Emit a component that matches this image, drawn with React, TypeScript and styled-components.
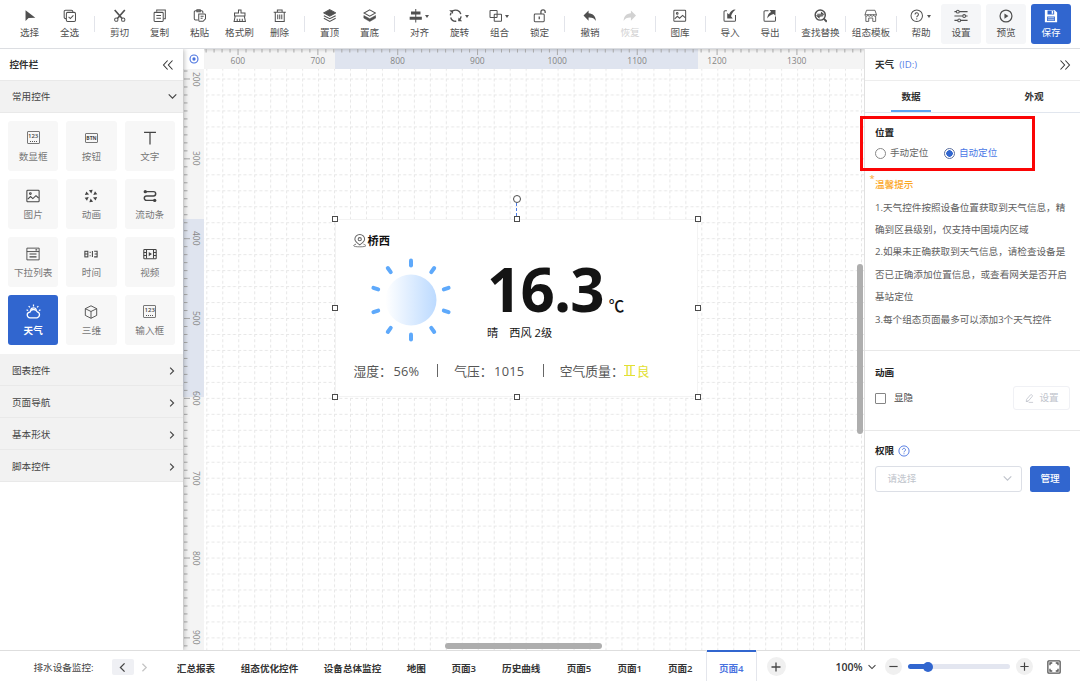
import React from "react";
import styled, { createGlobalStyle, css } from "styled-components";

const Global = createGlobalStyle`
  * { box-sizing: border-box; }
  body {
    margin: 0;
    background: #fff;
    color: #444;
    font-family: "Open Sans", "Noto Sans CJK SC", sans-serif;
    font-size: 9.6px;
    line-height: 14px;
    overflow: hidden;
  }
`;

const BLUE = "#3166cf";

/* ---------- icons ---------- */

type IconName = keyof typeof shapes;

const shapes = {
  cursor: <path d="M3 1.5v12.6l3.6-3.5 8-.3z" fill="currentColor" stroke="none" />,
  selectAll: (
    <>
      <path d="M3.6 11.4H3A1.6 1.6 0 0 1 1.400 9.800V3A1.600 1.600 0 0 1 3 1.400h7A1.600 1.600 0 0 1 11.600 3v.6" />
      <rect x="4" y="4" width="10.800" height="10.800" rx="1.500" />
      <path d="M6.600 9.400l2.100 2 3.600-3.900" />
    </>
  ),
  cut: (
    <>
      <path d="M2 1.200l8.800 10M14 1.200l-8.800 10" strokeWidth="2" />
      <circle cx="3.900" cy="12.600" r="2" />
      <circle cx="12.100" cy="12.600" r="2" />
    </>
  ),
  copy: (
    <>
      <path d="M4.400 3.400V1.300h10.200v10.300h-2.200" />
      <rect x="1.300" y="4" width="10.800" height="10.700" rx="1" />
      <path d="M4 7.800h5.500M4 10.900h5.500" />
    </>
  ),
  paste: (
    <>
      <path d="M5.800 13H3a1.500 1.500 0 0 1-1.500-1.500v-8A1.500 1.500 0 0 1 3 2h7.200a1.500 1.500 0 0 1 1.500 1.500V5" />
      <path d="M4.600 1h4v2.200h-4z" />
      <path d="M6.800 5.800h6.800a1.200 1.200 0 0 1 1.200 1.200v4.600L12 14.600H8a1.200 1.200 0 0 1-1.200-1.200z" />
      <path d="M9 8.600h3.600M9 11h2.400" />
    </>
  ),
  brush: (
    <>
      <path d="M6.500 4.700V1.300h3v3.400h4.700v3.600H1.800V4.700z" />
      <path d="M2.600 8.500L1.300 14.700h13.400l-1.300-6.200M5 14.500v-3M8 14.500v-3M11 14.500v-3" />
    </>
  ),
  trash: (
    <>
      <path d="M.8 3.800h14.400M5.200 3.500V1.300h5.600v2.200M2.700 4v10.700h10.600V4" />
      <path d="M5.600 6.500v5.500M8 6.500v5.500M10.400 6.500v5.500" />
    </>
  ),
  top: (
    <>
      <path d="M8 .8l7 3.800-7 3.800-7-3.800z" fill="currentColor" />
      <path d="M1 8l7 3.600L15 8M1 11l7 3.700 7-3.700" />
    </>
  ),
  bottom: (
    <>
      <path d="M8 1l6.800 3.700L8 8.400 1.200 4.700z" />
      <path d="M1 7.800l7 3.700 7-3.700v3l-7 4-7-4z" fill="currentColor" strokeWidth=".6" />
    </>
  ),
  align: (
    <>
      <path d="M8 0v16" />
      <path d="M2.400 3h11.200v3.600H2.400zM.800 9.200h14.400v3.600H.800z" fill="currentColor" stroke="none" />
    </>
  ),
  rotate: (
    <>
      <path d="M4.200 2.400A6.400 6.400 0 0 1 14 6.100M14.400 8.800a6.400 6.400 0 0 1-3.200 4.900M8.600 14.500A6.400 6.400 0 0 1 2 10M1.600 7.500a6.400 6.400 0 0 1 1-3" strokeWidth="1.600" />
      <path d="M.2 1.500h4.600v4.300zM15.800 14.500h-4.600v-4.300z" fill="currentColor" stroke="none" />
    </>
  ),
  group: (
    <>
      <rect x="1.200" y="1.800" width="8.400" height="8.400" rx=".6" />
      <rect x="6.200" y="6.200" width="8.600" height="8.400" rx=".6" />
    </>
  ),
  unlock: (
    <>
      <rect x="1.500" y="6" width="11.800" height="9" rx="1" />
      <path d="M9.400 6V3.400a2.500 2.500 0 0 1 5 0v1.400M7.400 8.800v3.400" strokeWidth="1.500" />
    </>
  ),
  undo: <path d="M6.600 1.800v3.300c5.400.3 8.400 3.500 8.700 9.200-1.700-3-4.400-4.300-8.700-4.100v3.600L.6 7.600z" fill="currentColor" stroke="none" />,
  redo: <path d="M9.400 1.800v3.300C4 5.400 1 8.600.7 14.300c1.700-3 4.400-4.300 8.700-4.100v3.600l6-6.200z" fill="currentColor" stroke="none" />,
  image: (
    <>
      <rect x="1" y="1.400" width="14" height="13.200" rx="1" />
      <circle cx="5" cy="5.200" r="1" />
      <path d="M2 11.600l3.200-3 2.600 2.300L11.400 7.600l3 2.700" />
    </>
  ),
  importIn: (
    <>
      <path d="M4.600 2H2.400A1.200 1.200 0 0 0 1.200 3.200v10.200a1.200 1.200 0 0 0 1.200 1.200h11.200a1.200 1.200 0 0 0 1.200-1.200V7" />
      <path d="M15 .8L13 .6C9.500 2 8 4 7.300 6.600L5 4.800v6.400h6.600L9.500 8.700C10.300 5.500 12 2.800 15 .8z" fill="currentColor" stroke="none" />
    </>
  ),
  exportOut: (
    <>
      <path d="M6.500 2H2.400A1.200 1.200 0 0 0 1.200 3.200v10.200a1.200 1.200 0 0 0 1.200 1.200h11.200a1.200 1.200 0 0 0 1.200-1.200V9" />
      <path d="M5 11.400C5.200 7.500 6.600 5 9.600 3.500L7.800 1.200h7v6.800l-2.200-2.100C8.800 6.800 6.700 8.500 5 11.400z" fill="currentColor" stroke="none" />
    </>
  ),
  find: (
    <>
      <circle cx="7.400" cy="7.200" r="6" strokeWidth="1.700" />
      <path d="M11.600 11.400l3.600 3.700" strokeWidth="2.300" />
      <path d="M3.800 6.300h5V4.300l2.400 2H3.800zM11 8.100H3.600l2.400 2.200V8.500z" fill="currentColor" strokeWidth="1.200" />
    </>
  ),
  shop: (
    <>
      <path d="M3 1.500h10l1.800 5.300H1.200zM2.200 8.500v6.200h3.400v-4h4.800v4h3.400V8.500" strokeWidth="1" />
      <path d="M1.200 6.800c0 2.500 3.400 2.500 3.400 0 0 2.500 3.400 2.500 3.400 0 0 2.500 3.400 2.500 3.400 0 0 2.500 3.400 2.500 3.400 0" strokeWidth=".9" />
    </>
  ),
  help: (
    <>
      <circle cx="8" cy="8" r="6.800" />
      <path d="M6 6.500a2 2 0 1 1 3.200 1.500C8.300 8.600 8 8.900 8 9.800M8 11.100v1.200" />
    </>
  ),
  sliders: (
    <>
      <path d="M.5 3h2.300M6 3h9.500M.5 8h9.500M13.200 8h2.300M.5 13h3.800M7.500 13h8" />
      <circle cx="4.400" cy="3" r="1.600" />
      <circle cx="11.600" cy="8" r="1.600" />
      <circle cx="5.900" cy="13" r="1.600" />
    </>
  ),
  play: (
    <>
      <circle cx="8" cy="8" r="6.800" strokeWidth="1.400" />
      <path d="M6.200 5v6l4.600-3z" fill="currentColor" stroke="none" />
    </>
  ),
  save: (
    <path
      fillRule="evenodd"
      d="M1 1h11l3 3v11H1zM4 1.800v4.400h7.600V1.800zM3.600 8.500v5.300h8.800V8.500zM4.600 9.600h6.800v1H4.600zM4.600 11.900h6.800v1H4.600zM8.800 2.400h1.700v3H8.800z"
      fill="currentColor"
      stroke="none"
    />
  ),
  text: <path d="M1.200 1.600h13.600M8 1.600v13.800" strokeWidth="1.400" />,
  burst: (
    <>
      {[0, 60, 120, 180, 240, 300].map((a) => (
        <path key={a} d="M5.600 1.300l4.300-.5-1.500 4.400z" fill="currentColor" stroke="none" transform={`rotate(${a} 8 8)`} />
      ))}
    </>
  ),
  flow: (
    <>
      <path d="M3 3h9a2.500 2.500 0 0 1 0 5H4a2.500 2.500 0 0 0 0 5h9" strokeWidth="1.700" />
      <circle cx="2.600" cy="3" r="1.900" fill="currentColor" stroke="none" />
      <circle cx="13.400" cy="13" r="1.900" fill="currentColor" stroke="none" />
    </>
  ),
  list: (
    <>
      <path d="M1 1.300h14v13.400H1zM1 5.200h14" strokeWidth="1" />
      <path d="M10.800 3.300h2M4 8h8M4 11.300h8" strokeWidth="1.400" />
    </>
  ),
  digits: (
    <>
      <rect x="1" y="4.900" width="3.400" height="6.400" />
      <path d="M1 8.100h3.400M7 5.500v1.300M7 9.400v1.300M9.600 4.700v6.700M11.600 4.900H15v6.400h-3.400M12.200 8.100H15" />
    </>
  ),
  video: (
    <>
      <rect x=".9" y="2.800" width="14.200" height="10.600" rx=".8" />
      <path d="M4 3v10.200M12 3v10.200M1 6.300h3M1 9.800h3M12 6.300h3M12 9.800h3" />
      <path d="M6.600 5.700v4.800l3.600-2.400z" fill="currentColor" stroke="none" />
    </>
  ),
  weather: (
    <>
      <path d="M4.400 14.700a3 3 0 0 1-.2-6 4.200 4.200 0 0 1 7.800-.4 3.300 3.300 0 0 1-.2 6.400z" strokeWidth="1.400" />
      <path d="M4.800 6.200a3.600 3.600 0 0 1 6.400-.1M8 2.600V.6M4.200 3.600L2.800 2.200M11.800 3.600l1.400-1.400M2.300 6.900L.6 6.300M13.700 6.900l1.700-.6" strokeWidth="1.300" />
    </>
  ),
  cube: (
    <path d="M8 .9l6.500 3.300v7.700L8 15.200l-6.500-3.300V4.200zM1.500 4.200L8 7.400l6.500-3.200M8 7.400v7.800" strokeWidth="1" />
  ),
  pin: (
    <>
      <path d="M8 12.900C4.400 10.400 2.200 8.500 2.200 6.200a5.800 5.600 0 0 1 11.600 0c0 2.300-2.200 4.200-5.800 6.700z" />
      <circle cx="8" cy="6.200" r="1.900" />
      <path d="M3.600 12c-5.500 2 -2.500 3.200 4.400 3.200s9.900-1.200 4.400-3.200" strokeWidth="1" />
    </>
  ),
  edit: (
    <path d="M3.600 13.700l.5-3.500L10.300 3a1.400 1.400 0 0 1 2.100-.1l.7.700a1.400 1.400 0 0 1 0 2L6.900 12.800zM7.500 15h7M3.600 13.700l3.300-.9" strokeWidth="1.300" />
  ),
  full: (
    <>
      <rect x="1" y="1" width="14" height="14" rx="1" strokeWidth="1.500" />
      <path d="M3.400 6V3.400H6M10 3.400h2.600V6M12.600 10v2.600H10M6 12.600H3.400V10" strokeWidth="1.500" />
    </>
  ),
  target: (
    <>
      <circle cx="8" cy="8" r="5.300" strokeWidth="1.500" />
      <circle cx="8" cy="8" r="2.200" fill="currentColor" stroke="none" />
    </>
  ),
  chevDown: <path d="M2.500 5l5.500 5.500L13.500 5" strokeWidth="1.700" />,
  chevRight: <path d="M5 2.500L10.500 8 5 13.500" strokeWidth="1.800" />,
  chevLeft: <path d="M11 2L5 8l6 6" strokeWidth="1.900" />,
  dblLeft: <path d="M7.500 2L2 8l5.500 6M14 2L8.500 8l5.500 6" strokeWidth="1.400" />,
  dblRight: <path d="M2 2l5.500 6L2 14M8.500 2L14 8l-5.500 6" strokeWidth="1.400" />,
  plus: <path d="M8 2v12M2 8h12" strokeWidth="1.700" />,
  minus: <path d="M2 8h12" strokeWidth="1.700" />,
};

const Svg = styled.svg`
  display: block;
  flex: none;
  fill: none;
  stroke: currentColor;
  stroke-width: 1.2;
`;

const Icon = ({ name, size = 14 }: { name: IconName; size?: number }) => (
  <Svg width={size} height={size} viewBox="0 0 16 16">
    {shapes[name]}
  </Svg>
);

const FramedLabel = styled.span<{ $short?: boolean }>`
  display: flex;
  flex-direction: column;
  align-items: center;
  width: 13px;
  height: ${(p) => (p.$short ? "10px" : "13px")};
  border: 1px solid #777;
  border-radius: 1px;
  font-size: ${(p) => (p.$short ? "5px" : "6px")};
  line-height: 8px;
  font-weight: ${(p) => (p.$short ? 700 : 600)};
  &::after {
    content: "";
    display: ${(p) => (p.$short ? "none" : "block")};
    width: 7px;
    border-top: 1px dotted #555;
    margin-top: 1px;
  }
`;

/* ---------- page frame ---------- */

const Page = styled.div`
  display: flex;
  flex-direction: column;
  width: 1080px;
  height: 681px;
  background: #fff;
`;

const Toolbar = styled.header`
  display: flex;
  flex: none;
  height: 49px;
  padding: 4px 0 0 9.5px;
  border-bottom: 1px solid #dcdee2;
`;

const Body = styled.div`
  display: flex;
  flex: none;
  height: 601px;
`;

const Tool = styled.button<{ $kind?: "plain" | "soft" | "primary"; $dim?: boolean }>`
  display: flex;
  flex-direction: column;
  align-items: center;
  flex: none;
  gap: 3px;
  width: 40px;
  height: 40px;
  padding: 5px 0 0;
  border: 0;
  border-radius: 3px;
  background: none;
  font: inherit;
  color: ${(p) => (p.$dim ? "#d2d2d2" : "#505050")};
  white-space: nowrap;
  ${(p) =>
    p.$kind === "soft" &&
    css`
      background: #f5f6f8;
      margin-right: 5px;
    `}
  ${(p) =>
    p.$kind === "primary" &&
    css`
      background: ${BLUE};
      color: #fff;
    `}
`;

const ToolGlyph = styled.span<{ $menu?: boolean }>`
  display: flex;
  align-items: center;
  gap: 3px;
  height: 14px;
  margin-left: ${(p) => (p.$menu ? "-1px" : "0")};
`;

const Caret = styled.i`
  border: 2.400px solid transparent;
  border-top: 3px solid #555;
  border-bottom: 0;
`;

const Gap = styled.i<{ $w?: number }>`
  display: flex;
  justify-content: center;
  flex: none;
  width: ${(p) => p.$w ?? 10}px;
  padding-top: 12px;
  &::before {
    content: "";
    width: 1px;
    height: 16px;
    background: #e2e4ea;
  }
`;

/* ---------- left panel ---------- */

const Left = styled.aside`
  position: relative;
  z-index: 2;
  flex: none;
  width: 183px;
  background: #fff;
  box-shadow: 1px 0 5px rgba(0, 0, 0, 0.28);
  clip-path: inset(0 -8px 0 0);
`;

const PanelHead = styled.div`
  display: flex;
  align-items: center;
  height: 31px;
  padding: 0 9px 0 9.5px;
  font-weight: 600;
  color: #333;
`;

const Push = styled.span`
  margin-left: auto;
`;

const Section = styled.div<{ $first?: boolean }>`
  display: flex;
  align-items: center;
  justify-content: space-between;
  height: ${(p) => (p.$first ? "33px" : "32px")};
  padding: ${(p) => (p.$first ? "0 5.5px 0 12px" : "2px 6.500px 0 12px")};
  background: #f2f2f2;
  border: solid #e9e9e9;
  border-width: ${(p) => (p.$first ? "1px 0" : "0 0 1px")};
  color: #444;
`;

const Tiles = styled.div`
  display: grid;
  grid-template-columns: repeat(3, 50.300px);
  grid-auto-rows: 50px;
  gap: 8px;
  padding: 8px 0 8px 8px;
  height: 241px;
`;

const Tile = styled.div<{ $on?: boolean }>`
  display: flex;
  flex-direction: column;
  align-items: center;
  gap: 5px;
  padding-top: 9.500px;
  border-radius: 3px;
  background: ${(p) => (p.$on ? BLUE : "#f7f7f7")};
  color: ${(p) => (p.$on ? "#fff" : "#777")};
  font-weight: ${(p) => (p.$on ? 600 : 400)};
`;

const TileGlyph = styled.span<{ $on?: boolean }>`
  display: flex;
  align-items: center;
  height: 14px;
  color: ${(p) => (p.$on ? "#fff" : "#444")};
`;

/* ---------- canvas ---------- */

const Work = styled.main`
  display: grid;
  flex: none;
  grid-template-columns: 21px 660px;
  grid-template-rows: 20px 581px;
  width: 681px;
`;

const Origin = styled.div`
  display: flex;
  align-items: center;
  justify-content: center;
  background: #fff;
  color: #4a73df;
  padding: 0 0 0 1px;
`;

const Ruler = styled.div<{ $vertical?: boolean }>`
  display: flex;
  position: relative;
  flex-direction: ${(p) => (p.$vertical ? "column" : "row")};
  overflow: hidden;
  color: #858585;
  font-size: 8.500px;
  line-height: 10px;
  background: ${(p) =>
    p.$vertical
      ? "linear-gradient(#f4f4f4 150px, #dfe4ef 150px 328px, #f4f4f4 328px)"
      : "linear-gradient(90deg, #f4f4f4 131px, #dfe4ef 131px 494px, #f4f4f4 494px)"};
  padding: ${(p) => (p.$vertical ? "0 0 0 8px" : "7px 0 0")};
  box-shadow: ${(p) => (p.$vertical ? "none" : "inset 0 3px 3px -2px rgba(0,0,0,.18)")};
`;

const Mark = styled.span<{ $vertical?: boolean; $first?: boolean }>`
  flex: none;
  text-align: center;
  ${(p) =>
    p.$vertical
      ? css`
          writing-mode: vertical-rl;
          width: 10px;
          height: 79.840px;
          margin-top: ${p.$first ? "-30px" : "0"};
        `
      : css`
          width: 79.840px;
          margin-left: ${p.$first ? "-6px" : "0"};
        `}
`;

const Ticks = styled.svg`
  position: absolute;
  top: 0;
  left: 0;
`;

const Stage = styled.div`
  position: relative;
  overflow: hidden;
  background: #fff;
`;

const Grid = styled.svg`
  display: block;
`;

const Widget = styled.section`
  position: absolute;
  left: 131px;
  top: 150px;
  width: 363px;
  height: 178px;
  padding: 14px 18px 0;
  background: #fff;
  border: 1px solid #f3f3f3;
  border-radius: 4px;
`;

const Place = styled.div`
  display: flex;
  align-items: center;
  gap: 1.500px;
  height: 14px;
  margin-left: -1.500px;
  font-size: 11.200px;
  font-weight: 700;
  color: #111;
`;

const PlaceIcon = styled.span`
  color: #666;
`;

const Main = styled.div`
  display: flex;
  height: 104px;
`;

const Sun = styled.svg`
  flex: none;
  width: 86px;
  height: 90px;
  margin: 7px 0 0 13.500px;
`;

const Reading = styled.div`
  padding: 7px 0 0 33.500px;
  color: #141414;
`;

const Temp = styled.div`
  display: flex;
  align-items: baseline;
  height: 68px;
  font-size: 60px;
  line-height: 68px;
  font-weight: 700;
  letter-spacing: -0.8px;
`;

const Unit = styled.span`
  margin-left: 5px;
  font-size: 15.500px;
  font-weight: 500;
  letter-spacing: 0;
`;

const Wind = styled.div`
  display: flex;
  gap: 11px;
  margin-top: 2px;
  font-size: 11.200px;
  line-height: 16px;
`;

const Facts = styled.div`
  display: flex;
  align-items: center;
  margin-top: 9.500px;
  height: 18px;
  margin-left: -0.500px;
  font-size: 12.800px;
  line-height: 18px;
  color: #555;
  white-space: nowrap;
`;

const Value = styled.span`
  margin-left: 1.500px;
  letter-spacing: 0.2px;
`;

const Bar = styled.span<{ $l: number; $r: number }>`
  margin: 0 ${(p) => p.$r}px 0 ${(p) => p.$l}px;
  width: 1px;
  height: 13px;
  background: #666;
`;

const Level = styled.span`
  display: flex;
  align-items: center;
  gap: 2px;
  color: #e2e032;
  font-family: "Noto Sans CJK SC", sans-serif;
`;

const Grade = styled.span`
  display: flex;
  justify-content: center;
  width: 11px;
  height: 11px;
  border: solid #e2e032;
  border-width: 1px 0;
  line-height: 9px;
`;

const Handle = styled.i<{ $x: number; $y: number; $round?: boolean }>`
  position: absolute;
  left: ${(p) => p.$x}px;
  top: ${(p) => p.$y}px;
  width: ${(p) => (p.$round ? 8 : 6)}px;
  height: ${(p) => (p.$round ? 8 : 6)}px;
  border: 1px solid #4c4c4c;
  border-radius: ${(p) => (p.$round ? "50%" : "0")};
  background: #fff;
`;

const Stem = styled.i`
  position: absolute;
  left: 312px;
  top: 134px;
  height: 13px;
  border-left: 1px dashed #4a7be6;
`;

const Scroll = styled.i<{ $x: number; $y: number; $w: number; $h: number }>`
  position: absolute;
  left: ${(p) => p.$x}px;
  top: ${(p) => p.$y}px;
  width: ${(p) => p.$w}px;
  height: ${(p) => p.$h}px;
  border-radius: 3px;
  background: #aeaeae;
`;

/* ---------- right panel ---------- */

const Right = styled.aside`
  position: relative;
  z-index: 3;
  flex: none;
  width: 216px;
  background: #fff;
  border-left: 1px solid #e0e0e0;
`;

const RightHead = styled(PanelHead)`
  height: 32px;
  padding: 1px 9.500px 0 10px;
  gap: 5px;
  border-bottom: 1px solid #ededed;
`;

const IdTag = styled.span`
  color: #5b82e8;
  font-weight: 400;
`;

const Tabs = styled.div`
  display: flex;
  justify-content: space-between;
  height: 32px;
  padding: 0 26px;
  border-bottom: 1px solid #e1e6ee;
`;

const Tab = styled.div<{ $on?: boolean }>`
  width: 40px;
  height: 31px;
  line-height: 32px;
  text-align: center;
  font-weight: 600;
  color: #333;
  border-bottom: 2px solid ${(p) => (p.$on ? "#5ba3f2" : "transparent")};
`;

const Block = styled.section<{ $h: number; $pad: number; $last?: boolean }>`
  height: ${(p) => p.$h}px;
  padding: ${(p) => p.$pad}px 10px 0;
  border-bottom: ${(p) => (p.$last ? "0" : "1px solid #e8e8e8")};
`;

const Title = styled.div`
  display: flex;
  align-items: center;
  gap: 4px;
  height: 14px;
  font-weight: 700;
  color: #222;
`;

const TitleIcon = styled.span`
  color: #4a73df;
`;

const Row = styled.div<{ $top?: number }>`
  display: flex;
  align-items: center;
  margin-top: ${(p) => p.$top ?? 0}px;
`;

const Choice = styled.label<{ $on?: boolean }>`
  display: flex;
  align-items: center;
  gap: 4px;
  margin-right: 15.500px;
  color: ${(p) => (p.$on ? "#4a78e6" : "#666")};
`;

const Dot = styled.i<{ $on?: boolean }>`
  width: 11px;
  height: 11px;
  border: 1px solid ${(p) => (p.$on ? "#5c6f9e" : "#888")};
  border-radius: 50%;
  background: ${(p) => (p.$on ? `radial-gradient(circle, ${BLUE} 3px, #fff 3.500px)` : "#fff")};
`;

const Tip = styled.div`
  position: relative;
  margin-top: 13.500px;
  line-height: 22.400px;
  color: #606060;
  white-space: nowrap;
`;

const TipTitle = styled.div`
  height: 23px;
  color: #fba61f;
  font-weight: 500;
  &::before {
    content: "*";
    position: absolute;
    left: -5.500px;
    top: -6px;
  }
`;

const Box = styled.i`
  width: 11px;
  height: 11px;
  margin-right: 8px;
  border: 1px solid #858585;
  border-radius: 1px;
`;

const GhostButton = styled.button`
  display: flex;
  align-items: center;
  justify-content: center;
  gap: 5px;
  width: 57px;
  height: 24px;
  margin-left: auto;
  padding: 0;
  border: 1px solid #f0f1f5;
  border-radius: 3px;
  background: #fff;
  color: #c0c4cc;
  font: inherit;
`;

const Select = styled.div`
  display: flex;
  align-items: center;
  justify-content: space-between;
  width: 147px;
  height: 26px;
  padding: 0 8px 0 11.500px;
  border: 1px solid #dcdfe6;
  border-radius: 3px;
  color: #c0c4cc;
`;

const Primary = styled.button`
  width: 40px;
  height: 26px;
  margin-left: 8px;
  padding: 0;
  border: 0;
  border-radius: 2.500px;
  background: ${BLUE};
  color: #fff;
  font: inherit;
  font-weight: 500;
`;

const RedFrame = styled.div`
  position: absolute;
  left: -5px;
  top: 67px;
  width: 175px;
  height: 55px;
  border: 3px solid #fb0505;
  pointer-events: none;
`;

/* ---------- footer ---------- */

const Footer = styled.footer`
  display: flex;
  flex: none;
  height: 31px;
  border-top: 1px solid #dedede;
  color: #444;
  white-space: nowrap;
`;

const Project = styled.div`
  width: 111.500px;
  padding-left: 33.500px;
  line-height: 33px;
`;

const Pager = styled.div`
  display: flex;
  align-items: center;
  width: 52.500px;
  height: 32px;
  gap: 5px;
  color: #c4c4c4;
`;

const Prev = styled.span`
  display: flex;
  align-items: center;
  justify-content: center;
  width: 22px;
  height: 16px;
  border-radius: 2px;
  background: #eff0f4;
  color: #444;
`;

const Sheet = styled.div<{ $w: number; $on?: boolean }>`
  flex: none;
  width: ${(p) => p.$w}px;
  height: 31px;
  margin-top: -1px;
  padding-top: 4px;
  line-height: 30px;
  text-align: center;
  font-weight: 600;
  color: ${(p) => (p.$on ? "#4a73df" : "#333")};
  border: solid #e4e6ec;
  border-width: 0 ${(p) => (p.$on ? "1px" : "0")};
  box-shadow: ${(p) => (p.$on ? `inset 0 2px ${BLUE}` : "none")};
`;

const Round = styled.span<{ $size: number }>`
  display: flex;
  align-items: center;
  justify-content: center;
  width: ${(p) => p.$size}px;
  height: ${(p) => p.$size}px;
  border-radius: 50%;
  background: #f0f0f0;
  color: #444;
`;

const FootTools = styled.div`
  display: flex;
  align-items: center;
  height: 31px;
  margin-left: 9.500px;
`;

const Zoom = styled.span`
  width: 27px;
  margin: 0 4px 0 50px;
  font-size: 10.500px;
  font-weight: 600;
  color: #333;
`;

const ZoomArrow = styled.span`
  margin-right: 8px;
`;

const Track = styled.div`
  display: flex;
  align-items: center;
  width: 102px;
  height: 5px;
  margin: 0 6px;
  border-radius: 3px;
  background: linear-gradient(90deg, ${BLUE} 20px, #e3e6f0 20px);
`;

const Thumb = styled.i`
  width: 10px;
  height: 10px;
  margin-left: 15.500px;
  border-radius: 50%;
  background: ${BLUE};
`;

const End = styled.span`
  margin-left: 14px;
  color: #555;
`;

/* ---------- data ---------- */

type ToolDef = { icon: IconName; label: string; menu?: boolean; dim?: boolean } | number;

const tools: ToolDef[] = [
  { icon: "cursor", label: "选择" },
  { icon: "selectAll", label: "全选" },
  10,
  { icon: "cut", label: "剪切" },
  { icon: "copy", label: "复制" },
  { icon: "paste", label: "粘贴" },
  { icon: "brush", label: "格式刷" },
  { icon: "trash", label: "删除" },
  10,
  { icon: "top", label: "置顶" },
  { icon: "bottom", label: "置底" },
  10,
  { icon: "align", label: "对齐", menu: true },
  { icon: "rotate", label: "旋转", menu: true },
  { icon: "group", label: "组合", menu: true },
  { icon: "unlock", label: "锁定" },
  10.5,
  { icon: "undo", label: "撤销" },
  { icon: "redo", label: "恢复", dim: true },
  10,
  { icon: "image", label: "图库" },
  10,
  { icon: "importIn", label: "导入" },
  { icon: "exportOut", label: "导出" },
  10.5,
  { icon: "find", label: "查找替换" },
  10.5,
  { icon: "shop", label: "组态模板" },
  10,
  { icon: "help", label: "帮助", menu: true },
];

const tiles: { icon: IconName | "num" | "btn"; label: string; on?: boolean }[] = [
  { icon: "num", label: "数显框" },
  { icon: "btn", label: "按钮" },
  { icon: "text", label: "文字" },
  { icon: "image", label: "图片" },
  { icon: "burst", label: "动画" },
  { icon: "flow", label: "流动条" },
  { icon: "list", label: "下拉列表" },
  { icon: "digits", label: "时间" },
  { icon: "video", label: "视频" },
  { icon: "weather", label: "天气", on: true },
  { icon: "cube", label: "三维" },
  { icon: "num", label: "输入框" },
];

const sections = ["图表控件", "页面导航", "基本形状", "脚本控件"];

const sheets: [string, number][] = [
  ["汇总报表", 64],
  ["组态优化控件", 83],
  ["设备总体监控", 83],
  ["地图", 44.5],
  ["页面3", 50.5],
  ["历史曲线", 64.5],
  ["页面5", 51],
  ["页面1", 50.5],
  ["页面2", 50.5],
];

const STEP = 7.984;

const tickPath = (offset: number, count: number, vertical: boolean) =>
  Array.from({ length: count }, (_, i) => {
    const pos = (offset + i * STEP).toFixed(2);
    const len = (i + 6) % 10 === 0 ? 6 : 3.5;
    return vertical ? `M1 ${pos}h${len}` : `M${pos} 0v${len}`;
  }).join("");

const handles = [
  [128, 147], [310, 147], [491, 147],
  [128, 236], [491, 236],
  [128, 325], [310, 325], [491, 325],
];

export default function App() {
  return (
    <Page>
      <Global />
      <Toolbar>
        {tools.map((t, i) =>
          typeof t === "number" ? (
            <Gap key={i} $w={t} />
          ) : (
            <Tool key={i} $dim={t.dim}>
              <ToolGlyph $menu={t.menu}>
                <Icon name={t.icon} size={13.5} />
                {t.menu && <Caret />}
              </ToolGlyph>
              {t.label}
            </Tool>
          )
        )}
        <Tool $kind="soft"><Icon name="sliders" />设置</Tool>
        <Tool $kind="soft"><Icon name="play" />预览</Tool>
        <Tool $kind="primary"><Icon name="save" />保存</Tool>
      </Toolbar>

      <Body>
        <Left>
          <PanelHead>控件栏<Push><Icon name="dblLeft" size={12} /></Push></PanelHead>
          <Section $first>常用控件<Icon name="chevDown" size={11} /></Section>
          <Tiles>
            {tiles.map((t) => (
              <Tile key={t.label} $on={t.on}>
                <TileGlyph $on={t.on}>
                  {t.icon === "num" ? (
                    <FramedLabel>123</FramedLabel>
                  ) : t.icon === "btn" ? (
                    <FramedLabel $short>BTN</FramedLabel>
                  ) : (
                    <Icon name={t.icon} size={t.on ? 15 : 14} />
                  )}
                </TileGlyph>
                {t.label}
              </Tile>
            ))}
          </Tiles>
          {sections.map((s) => (
            <Section key={s}>{s}<Icon name="chevRight" size={10} /></Section>
          ))}
        </Left>

        <Work>
          <Origin><Icon name="target" size={12} /></Origin>
          <Ruler>
            <Ticks width="660" height="8">
              <path d={tickPath(2.1, 83, false)} stroke="#a9a9a9" />
            </Ticks>
            {[600, 700, 800, 900, 1000, 1100, 1200, 1300].map((n, i) => (
              <Mark key={n} $first={i === 0}>{n}</Mark>
            ))}
          </Ruler>
          <Ruler $vertical>
            <Ticks width="10" height="581">
              <path d={tickPath(10 - 4 * STEP, 78, true)} stroke="#a9a9a9" />
            </Ticks>
            {[200, 300, 400, 500, 600, 700, 800, 900].map((n, i) => (
              <Mark key={n} $vertical $first={i === 0}>{n}</Mark>
            ))}
          </Ruler>
          <Stage>
            <Grid width="660" height="581">
              <defs>
                <pattern id="cells" x="2.300" y="9.500" width="15.968" height="15.968" patternUnits="userSpaceOnUse">
                  <path d="M0 .5H16M.5 0V16" fill="none" stroke="#e7e7e7" strokeDasharray="3 2.323" />
                </pattern>
              </defs>
              <rect width="660" height="581" fill="url(#cells)" />
            </Grid>
            <Widget>
              <Place><PlaceIcon><Icon name="pin" size={13.5} /></PlaceIcon>桥西</Place>
              <Main>
                <Sun viewBox="-43 -45 86 90">
                  <defs>
                    <linearGradient id="disc">
                      <stop offset="0" stopColor="#fff" />
                      <stop offset="1" stopColor="#bcdaff" />
                    </linearGradient>
                  </defs>
                  <circle r="25.500" fill="url(#disc)" />
                  {Array.from({ length: 10 }, (_, i) => (
                    <path
                      key={i}
                      d="M0-34.500V-39.500"
                      stroke="#5ea9fb"
                      strokeWidth="4"
                      strokeLinecap="round"
                      transform={`rotate(${i * 36})`}
                    />
                  ))}
                </Sun>
                <Reading>
                  <Temp>16.3<Unit>℃</Unit></Temp>
                  <Wind><span>晴</span><span>西风 2级</span></Wind>
                </Reading>
              </Main>
              <Facts>
                <span>湿度：</span><Value>56%</Value>
                <Bar $l={18} $r={16} />
                <span>气压：</span><Value>1015</Value>
                <Bar $l={18.5} $r={16} />
                <span>空气质量：</span>
                <Level><Grade>Ⅱ</Grade>良</Level>
              </Facts>
            </Widget>
            <Stem />
            {handles.map(([x, y]) => (
              <Handle key={`${x}-${y}`} $x={x} $y={y} />
            ))}
            <Handle $x={309} $y={126} $round />
            <Scroll $x={653} $y={195} $w={6} $h={170} />
            <Scroll $x={241} $y={574} $w={157} $h={6} />
          </Stage>
        </Work>

        <Right>
          <RightHead>天气<IdTag>(ID:)</IdTag><Push><Icon name="dblRight" size={12} /></Push></RightHead>
          <Tabs><Tab $on>数据</Tab><Tab>外观</Tab></Tabs>
          <Block $h={238} $pad={13}>
            <Title>位置</Title>
            <Row $top={6}>
              <Choice><Dot />手动定位</Choice>
              <Choice $on><Dot $on />自动定位</Choice>
            </Row>
            <Tip>
              <TipTitle>温馨提示</TipTitle>
              1.天气控件按照设备位置获取到天气信息，精<br />
              确到区县级别，仅支持中国境内区域<br />
              2.如果未正确获取到天气信息，请检查设备是<br />
              否已正确添加位置信息，或查看网关是否开启<br />
              基站定位<br />
              3.每个组态页面最多可以添加3个天气控件
            </Tip>
          </Block>
          <Block $h={79.5} $pad={14.5}>
            <Title>动画</Title>
            <Row $top={6.5}>
              <Box />显隐
              <GhostButton><Icon name="edit" size={10} />设置</GhostButton>
            </Row>
          </Block>
          <Block $h={120} $pad={13.5} $last>
            <Title>权限<TitleIcon><Icon name="help" size={12} /></TitleIcon></Title>
            <Row $top={7.5}>
              <Select>请选择<Icon name="chevDown" size={11} /></Select>
              <Primary>管理</Primary>
            </Row>
          </Block>
          <RedFrame />
        </Right>
      </Body>

      <Footer>
        <Project>排水设备监控:</Project>
        <Pager>
          <Prev><Icon name="chevLeft" size={11} /></Prev>
          <Icon name="chevRight" size={11} />
        </Pager>
        {sheets.map(([name, w]) => (
          <Sheet key={name} $w={w}>{name}</Sheet>
        ))}
        <Sheet $w={51.5} $on>页面4</Sheet>
        <FootTools>
          <Round $size={19}><Icon name="plus" size={12} /></Round>
          <Zoom>100%</Zoom>
          <ZoomArrow><Icon name="chevDown" size={10} /></ZoomArrow>
          <Round $size={17}><Icon name="minus" size={11} /></Round>
          <Track><Thumb /></Track>
          <Round $size={17}><Icon name="plus" size={11} /></Round>
          <End><Icon name="full" size={14} /></End>
        </FootTools>
      </Footer>
    </Page>
  );
}
